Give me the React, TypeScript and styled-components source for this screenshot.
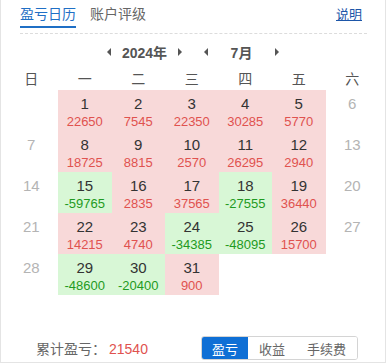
import React from "react";
import styled, { createGlobalStyle } from "styled-components";

const GlobalStyle = createGlobalStyle`
  body {
    margin: 0;
    background: #ffffff;
    font-family: "Liberation Sans", "Noto Sans CJK SC", sans-serif;
  }
`;

type Day = { day: number; value?: number; weekend?: boolean } | null;

const values: Record<number, number> = {
  1: 22650, 2: 7545, 3: 22350, 4: 30285, 5: 5770,
  8: 18725, 9: 8815, 10: 2570, 11: 26295, 12: 2940,
  15: -59765, 16: 2835, 17: 37565, 18: -27555, 19: 36440,
  22: 14215, 23: 4740, 24: -34385, 25: -48095, 26: 15700,
  29: -48600, 30: -20400, 31: 900,
};

// july 2024 starts on a monday
const cells: Day[] = [null];
for (let d = 1; d <= 31; d++) {
  const col = d % 7;
  const weekend = col === 0 || col === 6;
  cells.push({ day: d, value: values[d], weekend });
}

const weekdays = ["日", "一", "二", "三", "四", "五", "六"];

const App = () => {
  return (
    <>
      <GlobalStyle />
      <Frame>
        <HeaderBar>
          <Tab active>盈亏日历</Tab>
          <Tab>账户评级</Tab>
          <HelpLink>说明</HelpLink>
        </HeaderBar>

        <Nav>
          <NavGroup>
            <Arrow dir="left" />
            <NavLabel>2024年</NavLabel>
            <Arrow dir="right" />
          </NavGroup>
          <NavGroup>
            <Arrow dir="left" />
            <NavLabel>7月</NavLabel>
            <Arrow dir="right" />
          </NavGroup>
        </Nav>

        <Grid>
          {weekdays.map((w) => (
            <WeekHead key={w}>{w}</WeekHead>
          ))}
          {cells.map((c, i) => {
            if (!c) return <Cell key={"e" + i} />;
            if (c.weekend || c.value === undefined) {
              return (
                <Cell key={c.day}>
                  <DayNum muted>{c.day}</DayNum>
                </Cell>
              );
            }
            const tone = c.value < 0 ? "loss" : "gain";
            return (
              <Cell key={c.day} tone={tone}>
                <DayNum>{c.day}</DayNum>
                <DayValue tone={tone}>{c.value}</DayValue>
              </Cell>
            );
          })}
        </Grid>

        <Footer>
          <Total>
            累计盈亏：<TotalValue>21540</TotalValue>
          </Total>
          <Segments>
            <Segment active>盈亏</Segment>
            <Segment>收益</Segment>
            <Segment>手续费</Segment>
          </Segments>
        </Footer>
      </Frame>
    </>
  );
};

const Frame = styled.div`
  width: 386px;
  height: 363px;
  box-sizing: border-box;
  border: 1px solid #e4e4e4;
  border-top: none;
  display: flex;
  flex-direction: column;
`;

const HeaderBar = styled.div`
  display: flex;
  align-items: flex-end;
  gap: 14px;
  margin: 0 18px 0 19px;
  padding-bottom: 5px;
  border-bottom: 1px dashed #dcdcdc;
`;

const Tab = styled.div<{ active?: boolean }>`
  font-size: 14px;
  line-height: 20px;
  padding: 4px 0 2px;
  color: ${(p) => (p.active ? "#1f6fc5" : "#666666")};
  border-bottom: 2px solid ${(p) => (p.active ? "#1f6fc5" : "transparent")};
`;

const HelpLink = styled.a`
  margin-left: auto;
  margin-right: 5px;
  align-self: flex-start;
  padding-top: 5px;
  font-size: 13px;
  line-height: 20px;
  color: #1d56a8;
  text-decoration: underline;
`;

const Nav = styled.div`
  display: flex;
  justify-content: center;
  gap: 22px;
  height: 24px;
  margin-top: 6px;
`;

const NavGroup = styled.div`
  display: flex;
  align-items: center;
`;

const NavLabel = styled.div`
  width: 67px;
  text-align: center;
  font-size: 14px;
  font-weight: bold;
  color: #555555;
`;

const Arrow = styled.span<{ dir: "left" | "right" }>`
  width: 0;
  height: 0;
  border-top: 4px solid transparent;
  border-bottom: 4px solid transparent;
  ${(p) =>
    p.dir === "left"
      ? "border-right: 4px solid #555555;"
      : "border-left: 4px solid #555555;"}
`;

const Grid = styled.div`
  display: grid;
  grid-template-columns: repeat(7, 53.5px);
  grid-template-rows: 21px;
  grid-auto-rows: 41px;
  margin: 5px 0 0 3.5px;
`;

const WeekHead = styled.div`
  text-align: center;
  font-size: 14px;
  line-height: 21px;
  color: #555555;
`;

const Cell = styled.div<{ tone?: "gain" | "loss" }>`
  text-align: center;
  padding-top: 4px;
  box-sizing: border-box;
  background: ${(p) =>
    p.tone === "gain" ? "#f8d9d9" : p.tone === "loss" ? "#d8f7d6" : "transparent"};
`;

const DayNum = styled.div<{ muted?: boolean }>`
  font-size: 15px;
  line-height: 19px;
  color: ${(p) => (p.muted ? "#b4b4b4" : "#333333")};
`;

const DayValue = styled.div<{ tone: "gain" | "loss" }>`
  font-size: 13px;
  line-height: 17px;
  color: ${(p) => (p.tone === "gain" ? "#e0524f" : "#1f9a22")};
`;

const Footer = styled.div`
  display: flex;
  align-items: center;
  justify-content: space-between;
  margin-top: 41px;
  padding: 0 27px 0 35px;
  height: 24px;
`;

const Total = styled.div`
  font-size: 14px;
  color: #666666;
`;

const TotalValue = styled.span`
  color: #e0524f;
  margin-left: 3px;
`;

const Segments = styled.div`
  display: flex;
  height: 24px;
  border: 1px solid #d4d4d4;
  border-radius: 3px;
  overflow: hidden;
  box-sizing: border-box;
`;

const Segment = styled.div<{ active?: boolean }>`
  display: flex;
  align-items: center;
  padding: 0 10px;
  font-size: 13px;
  color: ${(p) => (p.active ? "#ffffff" : "#666666")};
  background: ${(p) => (p.active ? "#0f6fd5" : "#ffffff")};
  & + & {
    padding: 0 11px;
  }
`;

export default App;
